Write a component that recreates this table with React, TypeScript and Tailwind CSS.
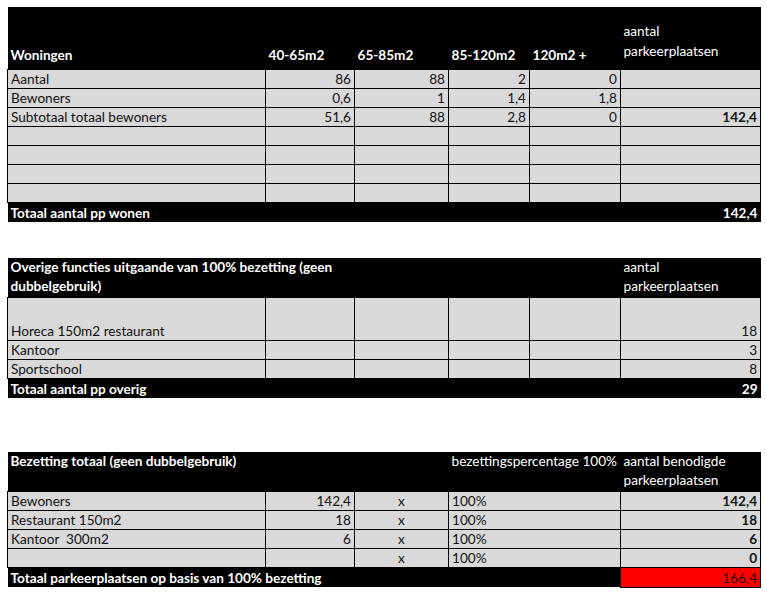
import React from 'react';

const cell = 'bg-[#d9d9d9] border border-black px-[3px] h-[19px] leading-[17px] align-bottom text-[#111]';
const num = `${cell} text-right`;
const head = 'bg-black text-white px-[3px] align-bottom';

const Cols = () => (
  <colgroup>
    <col className="w-[258px]" />
    <col className="w-[89px]" />
    <col className="w-[94px]" />
    <col className="w-[81px]" />
    <col className="w-[91px]" />
    <col className="w-[140px]" />
  </colgroup>
);

const Woningen = () => {
  const rows = [
    ['Aantal', '86', '88', '2', '0', ''],
    ['Bewoners', '0,6', '1', '1,4', '1,8', ''],
    ['Subtotaal totaal bewoners', '51,6', '88', '2,8', '0', '142,4'],
    ['', '', '', '', '', ''],
    ['', '', '', '', '', ''],
    ['', '', '', '', '', ''],
    ['', '', '', '', '', ''],
  ];

  return (
    <table className="table-fixed border-collapse w-[753px]">
      <Cols />
      <tbody>
        <tr className="h-[62px]">
          <td className={`${head} font-bold pb-[5px]`}>Woningen</td>
          <td className={`${head} font-bold pb-[5px]`}>40-65m2</td>
          <td className={`${head} font-bold pb-[5px]`}>65-85m2</td>
          <td className={`${head} font-bold pb-[5px]`}>85-120m2</td>
          <td className={`${head} font-bold pb-[5px]`}>120m2 +</td>
          <td className={`${head} pb-[8px] leading-[20px]`}>
            aantal
            <br />
            parkeerplaatsen
          </td>
        </tr>
        {rows.map((r, i) => (
          <tr key={i}>
            <td className={cell}>{r[0]}</td>
            <td className={num}>{r[1]}</td>
            <td className={num}>{r[2]}</td>
            <td className={num}>{r[3]}</td>
            <td className={num}>{r[4]}</td>
            <td className={`${num} font-bold`}>{r[5]}</td>
          </tr>
        ))}
        <tr className="h-[20px]">
          <td colSpan={5} className={`${head} font-bold`}>
            Totaal aantal pp wonen
          </td>
          <td className={`${head} font-bold text-right`}>142,4</td>
        </tr>
      </tbody>
    </table>
  );
};

const Overig = () => {
  const rows = [
    ['Kantoor', '3'],
    ['Sportschool', '8'],
  ];

  return (
    <table className="table-fixed border-collapse w-[753px]">
      <Cols />
      <tbody>
        <tr className="h-[39px]">
          <td colSpan={5} className={`${head} font-bold align-top leading-[19px]`}>
            Overige functies uitgaande van 100% bezetting (geen
            <br />
            dubbelgebruik)
          </td>
          <td className={`${head} align-top leading-[19px]`}>
            aantal
            <br />
            parkeerplaatsen
          </td>
        </tr>
        <tr className="h-[43px]">
          <td className={cell}>Horeca 150m2 restaurant</td>
          <td className={cell}></td>
          <td className={cell}></td>
          <td className={cell}></td>
          <td className={cell}></td>
          <td className={num}>18</td>
        </tr>
        {rows.map(([label, value]) => (
          <tr key={label}>
            <td className={cell}>{label}</td>
            <td className={cell}></td>
            <td className={cell}></td>
            <td className={cell}></td>
            <td className={cell}></td>
            <td className={num}>{value}</td>
          </tr>
        ))}
        <tr className="h-[20px]">
          <td colSpan={5} className={`${head} font-bold`}>
            Totaal aantal pp overig
          </td>
          <td className={`${head} font-bold text-right`}>29</td>
        </tr>
      </tbody>
    </table>
  );
};

const Bezetting = () => {
  const rows = [
    ['Bewoners', '142,4', '142,4'],
    ['Restaurant 150m2', '18', '18'],
    ['Kantoor\u00a0 300m2', '6', '6'],
    ['', '', '0'],
  ];

  return (
    <table className="table-fixed border-collapse w-[753px]">
      <Cols />
      <tbody>
        <tr className="h-[39px]">
          <td colSpan={3} className={`${head} font-bold align-top leading-[19px]`}>
            Bezetting totaal (geen dubbelgebruik)
          </td>
          <td colSpan={2} className={`${head} align-top leading-[19px] whitespace-nowrap`}>
            bezettingspercentage 100%
          </td>
          <td className={`${head} align-top leading-[19px]`}>
            aantal benodigde
            <br />
            parkeerplaatsen
          </td>
        </tr>
        {rows.map((r, i) => (
          <tr key={i}>
            <td className={cell}>{r[0]}</td>
            <td className={num}>{r[1]}</td>
            <td className={`${cell} text-center`}>x</td>
            <td colSpan={2} className={cell}>
              100%
            </td>
            <td className={`${num} font-bold`}>{r[2]}</td>
          </tr>
        ))}
        <tr className="h-[20px]">
          <td colSpan={5} className={`${head} font-bold`}>
            Totaal parkeerplaatsen op basis van 100% bezetting
          </td>
          <td className="bg-[#ff0000] border border-black px-[3px] text-right align-bottom text-[#2a0000]">
            166,4
          </td>
        </tr>
      </tbody>
    </table>
  );
};

const App = () => {
  return (
    <div
      className="w-[767px] h-[596px] bg-white pl-[7px] pt-[7px] text-[13.6px] leading-[18px]"
      style={{ fontFamily: 'Lato, "Open Sans", sans-serif' }}
    >
      <Woningen />
      <div className="h-[36px]" />
      <Overig />
      <div className="h-[54px]" />
      <Bezetting />
    </div>
  );
};

export default App;
